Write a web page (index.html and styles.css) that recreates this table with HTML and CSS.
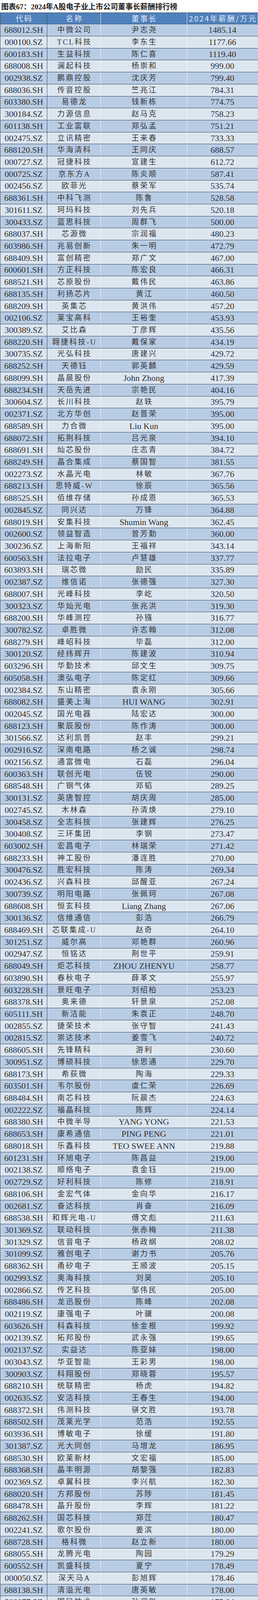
FILE: index.html
```html
<!DOCTYPE html>
<html lang="zh-CN">
<head>
<meta charset="utf-8">
<title>2024年A股电子业上市公司董事长薪酬排行榜</title>
<link rel="stylesheet" href="styles.css">
</head>
<body>
<div class="title">图表67：2024年A股电子业上市公司董事长薪酬排行榜</div>
<div class="table">
<div class="row head"><span>代码</span><span>名称</span><span>董事长</span><span>2024年薪酬/万元</span></div>
<div class="rows">
<div class="row"><span>688012.SH</span><span class="cn">中微公司</span><span class="cn">尹志尧</span><span>1485.14</span></div>
<div class="row"><span>000100.SZ</span><span class="cn">TCL科技</span><span class="cn">李东生</span><span>1177.66</span></div>
<div class="row"><span>600183.SH</span><span class="cn">生益科技</span><span class="cn">陈仁喜</span><span>1119.40</span></div>
<div class="row"><span>688008.SH</span><span class="cn">澜起科技</span><span class="cn">杨崇和</span><span>999.00</span></div>
<div class="row"><span>002938.SZ</span><span class="cn">鹏鼎控股</span><span class="cn">沈庆芳</span><span>799.40</span></div>
<div class="row"><span>688036.SH</span><span class="cn">传音控股</span><span class="cn">竺兆江</span><span>784.31</span></div>
<div class="row"><span>603380.SH</span><span class="cn">易德龙</span><span class="cn">钱新栋</span><span>774.75</span></div>
<div class="row"><span>300184.SZ</span><span class="cn">力源信息</span><span class="cn">赵马克</span><span>758.23</span></div>
<div class="row"><span>601138.SH</span><span class="cn">工业富联</span><span class="cn">郑弘孟</span><span>751.21</span></div>
<div class="row"><span>002475.SZ</span><span class="cn">立讯精密</span><span class="cn">王来春</span><span>733.33</span></div>
<div class="row"><span>688120.SH</span><span class="cn">华海清科</span><span class="cn">王同庆</span><span>688.57</span></div>
<div class="row"><span>000727.SZ</span><span class="cn">冠捷科技</span><span class="cn">宣建生</span><span>612.72</span></div>
<div class="row"><span>000725.SZ</span><span class="cn">京东方A</span><span class="cn">陈炎顺</span><span>587.41</span></div>
<div class="row"><span>002456.SZ</span><span class="cn">欧菲光</span><span class="cn">蔡荣军</span><span>535.74</span></div>
<div class="row"><span>688361.SH</span><span class="cn">中科飞测</span><span class="cn">陈鲁</span><span>528.58</span></div>
<div class="row"><span>301611.SZ</span><span class="cn">珂玛科技</span><span class="cn">刘先兵</span><span>520.18</span></div>
<div class="row"><span>300433.SZ</span><span class="cn">蓝思科技</span><span class="cn">周群飞</span><span>500.00</span></div>
<div class="row"><span>688037.SH</span><span class="cn">芯源微</span><span class="cn">宗润福</span><span>480.23</span></div>
<div class="row"><span>603986.SH</span><span class="cn">兆易创新</span><span class="cn">朱一明</span><span>472.79</span></div>
<div class="row"><span>688409.SH</span><span class="cn">富创精密</span><span class="cn">郑广文</span><span>467.00</span></div>
<div class="row"><span>600601.SH</span><span class="cn">方正科技</span><span class="cn">陈宏良</span><span>466.31</span></div>
<div class="row"><span>688521.SH</span><span class="cn">芯原股份</span><span class="cn">戴伟民</span><span>463.86</span></div>
<div class="row"><span>688135.SH</span><span class="cn">利扬芯片</span><span class="cn">黄江</span><span>460.50</span></div>
<div class="row"><span>688209.SH</span><span class="cn">英集芯</span><span class="cn">黄洪伟</span><span>457.20</span></div>
<div class="row"><span>002106.SZ</span><span class="cn">莱宝高科</span><span class="cn">王裕奎</span><span>453.93</span></div>
<div class="row"><span>300389.SZ</span><span class="cn">艾比森</span><span class="cn">丁彦辉</span><span>435.56</span></div>
<div class="row"><span>688220.SH</span><span class="cn">翱捷科技-U</span><span class="cn">戴保家</span><span>434.19</span></div>
<div class="row"><span>300735.SZ</span><span class="cn">光弘科技</span><span class="cn">唐建兴</span><span>429.72</span></div>
<div class="row"><span>688252.SH</span><span class="cn">天德钰</span><span class="cn">郭英麟</span><span>429.59</span></div>
<div class="row"><span>688099.SH</span><span class="cn">晶晨股份</span><span>John Zhong</span><span>417.39</span></div>
<div class="row"><span>688234.SH</span><span class="cn">天岳先进</span><span class="cn">宗艳民</span><span>404.16</span></div>
<div class="row"><span>300604.SZ</span><span class="cn">长川科技</span><span class="cn">赵轶</span><span>395.79</span></div>
<div class="row"><span>002371.SZ</span><span class="cn">北方华创</span><span class="cn">赵晋荣</span><span>395.00</span></div>
<div class="row"><span>688589.SH</span><span class="cn">力合微</span><span>Liu Kun</span><span>395.00</span></div>
<div class="row"><span>688072.SH</span><span class="cn">拓荆科技</span><span class="cn">吕光泉</span><span>394.10</span></div>
<div class="row"><span>688691.SH</span><span class="cn">灿芯股份</span><span class="cn">庄志青</span><span>384.72</span></div>
<div class="row"><span>688249.SH</span><span class="cn">晶合集成</span><span class="cn">蔡国智</span><span>381.55</span></div>
<div class="row"><span>002273.SZ</span><span class="cn">水晶光电</span><span class="cn">林敏</span><span>367.76</span></div>
<div class="row"><span>688213.SH</span><span class="cn">思特威-W</span><span class="cn">徐辰</span><span>365.56</span></div>
<div class="row"><span>688525.SH</span><span class="cn">佰维存储</span><span class="cn">孙成恩</span><span>365.53</span></div>
<div class="row"><span>002845.SZ</span><span class="cn">同兴达</span><span class="cn">万锋</span><span>364.88</span></div>
<div class="row"><span>688019.SH</span><span class="cn">安集科技</span><span>Shumin Wang</span><span>362.45</span></div>
<div class="row"><span>002600.SZ</span><span class="cn">领益智造</span><span class="cn">曾芳勤</span><span>360.00</span></div>
<div class="row"><span>300236.SZ</span><span class="cn">上海新阳</span><span class="cn">王福祥</span><span>343.14</span></div>
<div class="row"><span>600563.SH</span><span class="cn">法拉电子</span><span class="cn">卢慧雄</span><span>337.77</span></div>
<div class="row"><span>603893.SH</span><span class="cn">瑞芯微</span><span class="cn">励民</span><span>335.89</span></div>
<div class="row"><span>002387.SZ</span><span class="cn">维信诺</span><span class="cn">张德强</span><span>327.30</span></div>
<div class="row"><span>688007.SH</span><span class="cn">光峰科技</span><span class="cn">李屹</span><span>320.50</span></div>
<div class="row"><span>300323.SZ</span><span class="cn">华灿光电</span><span class="cn">张兆洪</span><span>319.30</span></div>
<div class="row"><span>688200.SH</span><span class="cn">华峰测控</span><span class="cn">孙镪</span><span>316.77</span></div>
<div class="row"><span>300782.SZ</span><span class="cn">卓胜微</span><span class="cn">许志翰</span><span>312.08</span></div>
<div class="row"><span>688279.SH</span><span class="cn">峰岹科技</span><span class="cn">毕磊</span><span>312.00</span></div>
<div class="row"><span>300120.SZ</span><span class="cn">经纬辉开</span><span class="cn">陈建波</span><span>310.94</span></div>
<div class="row"><span>603296.SH</span><span class="cn">华勤技术</span><span class="cn">邱文生</span><span>309.75</span></div>
<div class="row"><span>605058.SH</span><span class="cn">澳弘电子</span><span class="cn">陈定红</span><span>309.66</span></div>
<div class="row"><span>002384.SZ</span><span class="cn">东山精密</span><span class="cn">袁永刚</span><span>305.66</span></div>
<div class="row"><span>688082.SH</span><span class="cn">盛美上海</span><span>HUI WANG</span><span>302.91</span></div>
<div class="row"><span>002045.SZ</span><span class="cn">国光电器</span><span class="cn">陆宏达</span><span>300.00</span></div>
<div class="row"><span>688123.SH</span><span class="cn">聚辰股份</span><span class="cn">陈作涛</span><span>300.00</span></div>
<div class="row"><span>301566.SZ</span><span class="cn">达利凯普</span><span class="cn">赵丰</span><span>299.21</span></div>
<div class="row"><span>002916.SZ</span><span class="cn">深南电路</span><span class="cn">杨之诚</span><span>298.74</span></div>
<div class="row"><span>002156.SZ</span><span class="cn">通富微电</span><span class="cn">石磊</span><span>296.04</span></div>
<div class="row"><span>600363.SH</span><span class="cn">联创光电</span><span class="cn">伍锐</span><span>290.00</span></div>
<div class="row"><span>688548.SH</span><span class="cn">广钢气体</span><span class="cn">邓韬</span><span>289.25</span></div>
<div class="row"><span>300131.SZ</span><span class="cn">英唐智控</span><span class="cn">胡庆周</span><span>285.00</span></div>
<div class="row"><span>002745.SZ</span><span class="cn">木林森</span><span class="cn">孙清焕</span><span>279.10</span></div>
<div class="row"><span>300458.SZ</span><span class="cn">全志科技</span><span class="cn">张建辉</span><span>276.25</span></div>
<div class="row"><span>300408.SZ</span><span class="cn">三环集团</span><span class="cn">李钢</span><span>273.47</span></div>
<div class="row"><span>603002.SH</span><span class="cn">宏昌电子</span><span class="cn">林瑞荣</span><span>271.42</span></div>
<div class="row"><span>688233.SH</span><span class="cn">神工股份</span><span class="cn">潘连胜</span><span>270.00</span></div>
<div class="row"><span>300476.SZ</span><span class="cn">胜宏科技</span><span class="cn">陈涛</span><span>269.34</span></div>
<div class="row"><span>002436.SZ</span><span class="cn">兴森科技</span><span class="cn">邱醒亚</span><span>267.24</span></div>
<div class="row"><span>300739.SZ</span><span class="cn">明阳电路</span><span class="cn">张佩珂</span><span>267.08</span></div>
<div class="row"><span>688608.SH</span><span class="cn">恒玄科技</span><span>Liang Zhang</span><span>267.06</span></div>
<div class="row"><span>300136.SZ</span><span class="cn">信维通信</span><span class="cn">彭浩</span><span>266.79</span></div>
<div class="row"><span>688469.SH</span><span class="cn">芯联集成-U</span><span class="cn">赵奇</span><span>264.10</span></div>
<div class="row"><span>301251.SZ</span><span class="cn">威尔高</span><span class="cn">邓艳群</span><span>260.96</span></div>
<div class="row"><span>002947.SZ</span><span class="cn">恒铭达</span><span class="cn">荆世平</span><span>259.91</span></div>
<div class="row"><span>688049.SH</span><span class="cn">炬芯科技</span><span>ZHOU ZHENYU</span><span>258.77</span></div>
<div class="row"><span>603890.SH</span><span class="cn">春秋电子</span><span class="cn">薛革文</span><span>255.97</span></div>
<div class="row"><span>603228.SH</span><span class="cn">景旺电子</span><span class="cn">刘绍柏</span><span>253.23</span></div>
<div class="row"><span>688378.SH</span><span class="cn">奥来德</span><span class="cn">轩景泉</span><span>252.08</span></div>
<div class="row"><span>605111.SH</span><span class="cn">新洁能</span><span class="cn">朱袁正</span><span>248.70</span></div>
<div class="row"><span>002855.SZ</span><span class="cn">捷荣技术</span><span class="cn">张守智</span><span>241.43</span></div>
<div class="row"><span>002815.SZ</span><span class="cn">崇达技术</span><span class="cn">姜雪飞</span><span>240.72</span></div>
<div class="row"><span>688605.SH</span><span class="cn">先锋精科</span><span class="cn">游利</span><span>230.60</span></div>
<div class="row"><span>300951.SZ</span><span class="cn">博硕科技</span><span class="cn">徐思通</span><span>229.70</span></div>
<div class="row"><span>688173.SH</span><span class="cn">希荻微</span><span class="cn">陶海</span><span>229.33</span></div>
<div class="row"><span>603501.SH</span><span class="cn">韦尔股份</span><span class="cn">虞仁荣</span><span>226.69</span></div>
<div class="row"><span>688484.SH</span><span class="cn">南芯科技</span><span class="cn">阮晨杰</span><span>224.63</span></div>
<div class="row"><span>002222.SZ</span><span class="cn">福晶科技</span><span class="cn">陈辉</span><span>224.14</span></div>
<div class="row"><span>688380.SH</span><span class="cn">中微半导</span><span>YANG YONG</span><span>221.53</span></div>
<div class="row"><span>688653.SH</span><span class="cn">康希通信</span><span>PING PENG</span><span>221.01</span></div>
<div class="row"><span>688018.SH</span><span class="cn">乐鑫科技</span><span>TEO SWEE ANN</span><span>219.88</span></div>
<div class="row"><span>601231.SH</span><span class="cn">环旭电子</span><span class="cn">陈昌益</span><span>219.00</span></div>
<div class="row"><span>002138.SZ</span><span class="cn">顺络电子</span><span class="cn">袁金钰</span><span>219.00</span></div>
<div class="row"><span>002729.SZ</span><span class="cn">好利科技</span><span class="cn">陈修</span><span>218.91</span></div>
<div class="row"><span>688106.SH</span><span class="cn">金宏气体</span><span class="cn">金向华</span><span>216.17</span></div>
<div class="row"><span>002681.SZ</span><span class="cn">奋达科技</span><span class="cn">肖奋</span><span>216.09</span></div>
<div class="row"><span>688538.SH</span><span class="cn">和辉光电-U</span><span class="cn">傅文彪</span><span>211.63</span></div>
<div class="row"><span>301369.SZ</span><span class="cn">联动科技</span><span class="cn">张赤梅</span><span>211.38</span></div>
<div class="row"><span>301329.SZ</span><span class="cn">信音电子</span><span class="cn">杨政纲</span><span>208.02</span></div>
<div class="row"><span>301099.SZ</span><span class="cn">雅创电子</span><span class="cn">谢力书</span><span>205.76</span></div>
<div class="row"><span>688362.SH</span><span class="cn">甬矽电子</span><span class="cn">王顺波</span><span>205.15</span></div>
<div class="row"><span>002993.SZ</span><span class="cn">奥海科技</span><span class="cn">刘昊</span><span>205.10</span></div>
<div class="row"><span>002866.SZ</span><span class="cn">传艺科技</span><span class="cn">邹伟民</span><span>205.00</span></div>
<div class="row"><span>688486.SH</span><span class="cn">龙迅股份</span><span class="cn">陈峰</span><span>202.08</span></div>
<div class="row"><span>002119.SZ</span><span class="cn">康强电子</span><span class="cn">叶骥</span><span>200.08</span></div>
<div class="row"><span>603626.SH</span><span class="cn">科森科技</span><span class="cn">徐金根</span><span>199.92</span></div>
<div class="row"><span>002139.SZ</span><span class="cn">拓邦股份</span><span class="cn">武永强</span><span>199.65</span></div>
<div class="row"><span>002137.SZ</span><span class="cn">实益达</span><span class="cn">陈亚妹</span><span>198.00</span></div>
<div class="row"><span>003043.SZ</span><span class="cn">华亚智能</span><span class="cn">王彩男</span><span>198.00</span></div>
<div class="row"><span>300903.SZ</span><span class="cn">科翔股份</span><span class="cn">郑晓蓉</span><span>195.57</span></div>
<div class="row"><span>688210.SH</span><span class="cn">统联精密</span><span class="cn">杨虎</span><span>194.82</span></div>
<div class="row"><span>002635.SZ</span><span class="cn">安洁科技</span><span class="cn">王春生</span><span>194.00</span></div>
<div class="row"><span>688372.SH</span><span class="cn">伟测科技</span><span class="cn">骈文胜</span><span>193.78</span></div>
<div class="row"><span>688502.SH</span><span class="cn">茂莱光学</span><span class="cn">范浩</span><span>192.55</span></div>
<div class="row"><span>603936.SH</span><span class="cn">博敏电子</span><span class="cn">徐缓</span><span>191.80</span></div>
<div class="row"><span>301387.SZ</span><span class="cn">光大同创</span><span class="cn">马增龙</span><span>186.95</span></div>
<div class="row"><span>688530.SH</span><span class="cn">欧莱新材</span><span class="cn">文宏福</span><span>185.00</span></div>
<div class="row"><span>688368.SH</span><span class="cn">晶丰明源</span><span class="cn">胡黎强</span><span>182.83</span></div>
<div class="row"><span>002369.SZ</span><span class="cn">卓翼科技</span><span class="cn">李兴航</span><span>182.30</span></div>
<div class="row"><span>688020.SH</span><span class="cn">方邦股份</span><span class="cn">苏陟</span><span>181.45</span></div>
<div class="row"><span>688478.SH</span><span class="cn">晶升股份</span><span class="cn">李辉</span><span>181.22</span></div>
<div class="row"><span>688262.SH</span><span class="cn">国芯科技</span><span class="cn">郑茳</span><span>180.47</span></div>
<div class="row"><span>002241.SZ</span><span class="cn">歌尔股份</span><span class="cn">姜滨</span><span>180.00</span></div>
<div class="row"><span>688728.SH</span><span class="cn">格科微</span><span class="cn">赵立新</span><span>180.00</span></div>
<div class="row"><span>688055.SH</span><span class="cn">龙腾光电</span><span class="cn">陶园</span><span>179.29</span></div>
<div class="row"><span>600552.SH</span><span class="cn">凯盛科技</span><span class="cn">夏宁</span><span>178.49</span></div>
<div class="row"><span>000050.SZ</span><span class="cn">深天马A</span><span class="cn">彭旭辉</span><span>178.46</span></div>
<div class="row"><span>688138.SH</span><span class="cn">清溢光电</span><span class="cn">唐英敏</span><span>178.00</span></div>
<div class="row"><span>300077.SZ</span><span class="cn">国民技术</span><span class="cn">孙迎彤</span><span>175.04</span></div>
<div class="row"><span>688093.SH</span><span class="cn">世华科技</span><span class="cn">顾正青</span><span>172.76</span></div>
<div class="row"><span>300852.SZ</span><span class="cn">四会富仕</span><span class="cn">刘天明</span><span>172.45</span></div>
<div class="row"><span>832491.BJ</span><span class="cn">奥迪威</span><span class="cn">张曙光</span><span>171.83</span></div>
<div class="row"><span>301326.SZ</span><span class="cn">捷邦科技</span><span class="cn">辛云峰</span><span>169.59</span></div>
<div class="row"><span>301626.SZ</span><span class="cn">苏州天脉</span><span class="cn">谢毅</span><span>168.64</span></div>
<div class="row"><span>688048.SH</span><span class="cn">长光华芯</span><span class="cn">闵大勇</span><span>168.15</span></div>
<div class="row"><span>603328.SH</span><span class="cn">依顿电子</span><span class="cn">张邯</span><span>167.40</span></div>
<div class="row"><span>688332.SH</span><span class="cn">中科蓝讯</span><span class="cn">黄志强</span><span>167.32</span></div>
<div class="row"><span>600460.SH</span><span class="cn">士兰微</span><span class="cn">陈向东</span><span>165.00</span></div>
<div class="row"><span>603052.SH</span><span class="cn">可川科技</span><span class="cn">朱春华</span><span>163.67</span></div>
<div class="row"><span>688515.SH</span><span class="cn">裕太微-U</span><span class="cn">史清</span><span>160.12</span></div>
<div class="row"><span>688371.SH</span><span class="cn">菲沃泰</span><span class="cn">宗坚</span><span>160.00</span></div>
<div class="row"><span>300429.SZ</span><span class="cn">强力新材</span><span class="cn">钱晓春</span><span>159.81</span></div>
<div class="row"><span>001308.SZ</span><span class="cn">康冠科技</span><span class="cn">凌斌</span><span>158.00</span></div>
<div class="row"><span>600707.SH</span><span class="cn">彩虹股份</span><span class="cn">李淼</span><span>157.59</span></div>
<div class="row"><span>300219.SZ</span><span class="cn">鸿利智汇</span><span class="cn">李俊东</span><span>155.81</span></div>
<div class="row"><span>603186.SH</span><span class="cn">华正新材</span><span class="cn">刘涛</span><span>155.31</span></div>
<div class="row"><span>603005.SH</span><span class="cn">晶方科技</span><span class="cn">王蔚</span><span>153.56</span></div>
<div class="row"><span>300088.SZ</span><span class="cn">长信科技</span><span class="cn">高前文</span><span>152.20</span></div>
<div class="row"><span>300679.SZ</span><span class="cn">电连技术</span><span class="cn">陈育宣</span><span>151.41</span></div>
<div class="row"><span>605218.SH</span><span class="cn">伟时电子</span><span class="cn">山口胜</span><span>150.83</span></div>
<div class="row"><span>300256.SZ</span><span class="cn">星星科技</span><span class="cn">应光捷</span><span>150.52</span></div>
<div class="row"><span>301051.SZ</span><span class="cn">信濠光电</span><span class="cn">白如敬</span><span>150.49</span></div>
<div class="row"><span>688496.SH</span><span class="cn">清越科技</span><span class="cn">高裕弟</span><span>150.20</span></div>
<div class="row"><span>688381.SH</span><span class="cn">帝奥微</span><span class="cn">鞠建宏</span><span>150.00</span></div>
<div class="row"><span>603633.SH</span><span class="cn">徕木股份</span><span class="cn">朱新爱</span><span>150.00</span></div>
<div class="row"><span>300709.SZ</span><span class="cn">精研科技</span><span class="cn">王明喜</span><span>149.60</span></div>
<div class="row"><span>301379.SZ</span><span class="cn">天山电子</span><span class="cn">王嗣纬</span><span>149.31</span></div>
<div class="row"><span>603327.SH</span><span class="cn">福蓉科技</span><span class="cn">张景忠</span><span>149.24</span></div>
<div class="row"><span>688150.SH</span><span class="cn">莱特光电</span><span class="cn">王亚龙</span><span>149.07</span></div>
<div class="row"><span>300666.SZ</span><span class="cn">江丰电子</span><span class="cn">姚力军</span><span>149.02</span></div>
<div class="row"><span>300493.SZ</span><span class="cn">润欣科技</span><span class="cn">郎晓刚</span><span>148.59</span></div>
<div class="row"><span>301123.SZ</span><span class="cn">奕东电子</span><span class="cn">邓玉泉</span><span>147.88</span></div>
<div class="row"><span>301282.SZ</span><span class="cn">金禄电子</span><span class="cn">李继林</span><span>147.80</span></div>
<div class="row"><span>688325.SH</span><span class="cn">赛微微电</span><span class="cn">蒋燕波</span><span>146.81</span></div>
<div class="row"><span>603341.SH</span><span class="cn">龙旗科技</span><span class="cn">杜军红</span><span>145.13</span></div>
<div class="row"><span>688261.SH</span><span class="cn">东微半导</span><span class="cn">龚轶</span><span>140.23</span></div>
<div class="row"><span>688141.SH</span><span class="cn">杰华特</span><span>ZHOU XUN WEI</span><span>140.08</span></div>
<div class="row"><span>603061.SH</span><span class="cn">金海通</span><span class="cn">崔学峰</span><span>139.25</span></div>
<div class="row"><span>688550.SH</span><span class="cn">瑞联新材</span><span class="cn">刘晓春</span><span>139.00</span></div>
<div class="row"><span>605588.SH</span><span class="cn">冠石科技</span><span class="cn">张建巍</span><span>137.23</span></div>
<div class="row"><span>688181.SH</span><span class="cn">八亿时空</span><span class="cn">赵雷</span><span>136.96</span></div>
<div class="row"><span>603078.SH</span><span class="cn">江化微</span><span class="cn">殷福华</span><span>136.84</span></div>
<div class="row"><span>600171.SH</span><span class="cn">上海贝岭</span><span class="cn">杨琨</span><span>136.68</span></div>
<div class="row"><span>002199.SZ</span><span class="cn">*ST东晶</span><span class="cn">王皓</span><span>136.51</span></div>
<div class="row"><span>603068.SH</span><span class="cn">博通集成</span><span>Pengfei Zhang</span><span>135.61</span></div>
<div class="row"><span>300623.SZ</span><span class="cn">捷捷微电</span><span class="cn">黄善兵</span><span>134.91</span></div>
<div class="row"><span>002782.SZ</span><span class="cn">可立克</span><span class="cn">肖铿</span><span>134.30</span></div>
<div class="row"><span>000536.SZ</span><span class="cn">华映科技</span><span class="cn">林俊</span><span>134.13</span></div>
<div class="row"><span>300661.SZ</span><span class="cn">圣邦股份</span><span class="cn">张世龙</span><span>134.09</span></div>
<div class="row"><span>301383.SZ</span><span class="cn">天键股份</span><span class="cn">冯砚儒</span><span>133.44</span></div>
<div class="row"><span>603290.SH</span><span class="cn">斯达半导</span><span class="cn">沈华</span><span>132.48</span></div>
<div class="row"><span>001309.SZ</span><span class="cn">德明利</span><span class="cn">李虎</span><span>131.50</span></div>
<div class="row"><span>002765.SZ</span><span class="cn">蓝黛科技</span><span class="cn">朱俊翰</span><span>131.00</span></div>
<div class="row"><span>688127.SH</span><span class="cn">蓝特光学</span><span class="cn">徐云明</span><span>130.94</span></div>
<div class="row"><span>300657.SZ</span><span class="cn">弘信电子</span><span class="cn">李强</span><span>130.00</span></div>
<div class="row"><span>002036.SZ</span><span class="cn">联创电子</span><span class="cn">曾吉勇</span><span>129.48</span></div>
<div class="row"><span>300398.SZ</span><span class="cn">飞凯材料</span><span>ZHANG JINSHAN</span><span>129.22</span></div>
<div class="row"><span>301321.SZ</span><span class="cn">翰博高新</span><span class="cn">王照忠</span><span>129.20</span></div>
<div class="row"><span>301041.SZ</span><span class="cn">金百泽</span><span class="cn">武守坤</span><span>128.89</span></div>
<div class="row"><span>688230.SH</span><span class="cn">芯导科技</span><span class="cn">欧新华</span><span>128.58</span></div>
<div class="row"><span>002859.SZ</span><span class="cn">洁美科技</span><span class="cn">方隽云</span><span>126.79</span></div>
<div class="row"><span>688110.SH</span><span class="cn">东芯股份</span><span class="cn">蒋学明</span><span>126.00</span></div>
<div class="row"><span>688259.SH</span><span class="cn">创耀科技</span><span>YAOLONG TAN</span><span>125.68</span></div>
<div class="row"><span>300976.SZ</span><span class="cn">达瑞电子</span><span class="cn">李清平</span><span>125.44</span></div>
<div class="row"><span>002055.SZ</span><span class="cn">得润电子</span><span class="cn">邱扬</span><span>125.31</span></div>
<div class="row"><span>301536.SZ</span><span class="cn">星宸科技</span><span class="cn">林永育</span><span>124.25</span></div>
<div class="row"><span>688661.SH</span><span class="cn">和林微纳</span><span class="cn">骆兴顺</span><span>123.49</span></div>
<div class="row"><span>002289.SZ</span><span class="cn">*ST宇顺</span><span class="cn">嵇敏</span><span>123.10</span></div>
<div class="row"><span>688603.SH</span><span class="cn">天承科技</span><span class="cn">童茂军</span><span>122.70</span></div>
<div class="row"><span>600237.SH</span><span class="cn">铜峰电子</span><span class="cn">黄明强</span><span>122.30</span></div>
<div class="row"><span>688655.SH</span><span class="cn">迅捷兴</span><span class="cn">马卓</span><span>121.94</span></div>
<div class="row"><span>603375.SH</span><span class="cn">盛景微</span><span class="cn">张永刚</span><span>121.84</span></div>
<div class="row"><span>688693.SH</span><span class="cn">锴威特</span><span class="cn">丁国华</span><span>121.48</span></div>
<div class="row"><span>600666.SH</span><span class="cn">奥瑞德</span><span class="cn">朱三高</span><span>121.10</span></div>
<div class="row"><span>300301.SZ</span><span class="cn">*ST长方</span><span class="cn">吴涛祥</span><span>120.34</span></div>
<div class="row"><span>688539.SH</span><span class="cn">高华科技</span><span class="cn">李维平</span><span>120.16</span></div>
<div class="row"><span>300975.SZ</span><span class="cn">商络电子</span><span class="cn">沙宏志</span><span>119.62</span></div>
<div class="row"><span>000021.SZ</span><span class="cn">深科技</span><span class="cn">韩宗远</span><span>119.38</span></div>
<div class="row"><span>688458.SH</span><span class="cn">美芯晟</span><span class="cn">程宝洪</span><span>118.67</span></div>
<div class="row"><span>002741.SZ</span><span class="cn">光华科技</span><span class="cn">陈汉昭</span><span>118.45</span></div>
<div class="row"><span>002579.SZ</span><span class="cn">中京电子</span><span class="cn">杨林</span><span>118.22</span></div>
<div class="row"><span>688401.SH</span><span class="cn">路维光电</span><span class="cn">杜武兵</span><span>118.06</span></div>
<div class="row"><span>300889.SZ</span><span class="cn">爱克股份</span><span class="cn">谢明武</span><span>117.63</span></div>
<div class="row"><span>688449.SH</span><span class="cn">联芸科技</span><span class="cn">方小玲</span><span>117.04</span></div>
<div class="row"><span>600745.SH</span><span class="cn">闻泰科技</span><span class="cn">张秋红</span><span>116.49</span></div>
<div class="row"><span>688079.SH</span><span class="cn">美迪凯</span><span class="cn">葛文志</span><span>116.24</span></div>
<div class="row"><span>688256.SH</span><span class="cn">寒武纪-U</span><span class="cn">陈天石</span><span>116.22</span></div>
<div class="row"><span>688766.SH</span><span class="cn">普冉股份</span><span class="cn">王楠</span><span>116.11</span></div>
<div class="row"><span>300456.SZ</span><span class="cn">赛微电子</span><span class="cn">杨云春</span><span>116.06</span></div>
<div class="row"><span>300545.SZ</span><span class="cn">联得装备</span><span class="cn">聂泉</span><span>116.00</span></div>
<div class="row"><span>688260.SH</span><span class="cn">昀冢科技</span><span class="cn">王宾</span><span>115.95</span></div>
<div class="row"><span>002955.SZ</span><span class="cn">鸿合科技</span><span class="cn">孙晓蕾</span><span>115.65</span></div>
</div>
</div>
</body>
</html>
```

FILE: styles.css
```css
html, body {
  margin: 0;
  padding: 0;
  background: #ffffff;
}

body {
  width: 660px;
}

.title {
  height: 31.5px;
  box-sizing: border-box;
  display: flex;
  align-items: center;
  padding-left: 3px;
  font-family: "Liberation Serif", "Noto Sans CJK SC", serif;
  font-weight: 700;
  font-size: 19px;
  color: #1c1c1c;
  white-space: nowrap;
  overflow: hidden;
}

.table {
  border-left: 1px solid #3e4857;
}

.row {
  display: grid;
  grid-template-columns: 120px 137px 221px 181px;
  grid-template-rows: 100%;
  height: 30.73px;
  box-sizing: border-box;
  border-bottom: 1px solid #3c4756;
  overflow: hidden;
}

.row > span {
  display: flex;
  align-items: center;
  justify-content: center;
  min-height: 0;
  border-right: 1px solid #f2f6fb;
  font-family: "Liberation Serif", "Noto Sans CJK SC", serif;
  font-size: 22px;
  line-height: 24px;
  color: #2e2e2e;
  white-space: nowrap;
}

.row > span:first-child {
  border-right-color: #3f4a59;
}

.row > span:last-child {
  border-right-color: #c9d6e6;
}

.row > span.cn {
  font-size: 19px;
  letter-spacing: 3px;
  padding-left: 3px;
  color: #353535;
}

.rows .row:nth-child(odd) {
  background: #b8cce4;
}

.rows .row:nth-child(even) {
  background: #dce6f1;
}

.row.head {
  background: #4f81bd;
  border-top: 1px solid #3c4756;
}

.row.head > span {
  font-family: "Noto Sans CJK SC", sans-serif;
  font-size: 19px;
  letter-spacing: 3px;
  padding-left: 3px;
  color: #e4ecf6;
}
```
